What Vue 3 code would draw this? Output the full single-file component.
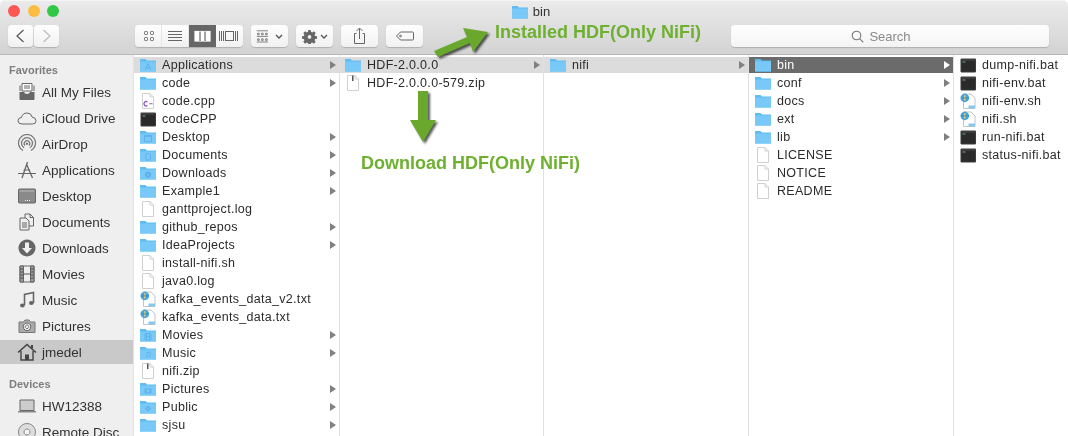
<template>
  <div class="finder">
    <header class="titlebar">
      <div class="title-row">
        <div class="lights">
          <span class="light red"></span>
          <span class="light yellow"></span>
          <span class="light green"></span>
        </div>
        <div class="title">
          <svg class="file-icon" viewBox="0 0 16 16"><path v-for="(p, i) in fileIcons.folder" :key="i" :d="p.d" :fill="p.f || 'none'" :stroke="p.s || 'none'" /></svg>
          <span>bin</span>
        </div>
      </div>
      <div class="toolbar">
        <div class="nav">
          <button class="btn nav-btn">
            <svg viewBox="0 0 25 22"><path d="M15.5 5 L9 11 L15.5 17" fill="none" stroke="#555" stroke-width="1.2" /></svg>
          </button>
          <button class="btn nav-btn">
            <svg viewBox="0 0 25 22"><path d="M9.5 5 L16 11 L9.5 17" fill="none" stroke="#bbb" stroke-width="1.2" /></svg>
          </button>
        </div>
        <div class="btn views">
          <span class="view">
            <svg viewBox="0 0 27 22" fill="none" stroke="#666"><rect x="9.5" y="6.5" width="3" height="3" rx=".8" /><rect x="15.5" y="6.5" width="3" height="3" rx=".8" /><rect x="9.5" y="12.5" width="3" height="3" rx=".8" /><rect x="15.5" y="12.5" width="3" height="3" rx=".8" /></svg>
          </span>
          <span class="view">
            <svg viewBox="0 0 27 22" stroke="#666"><path d="M6 6.5h14M6 9.5h14M6 12.5h14M6 15.5h14" /></svg>
          </span>
          <span class="view active">
            <svg viewBox="0 0 27 22" fill="none" stroke="#fff" stroke-width="1.2"><rect x="6" y="6.5" width="15" height="9.5" fill="#fff" /><path d="M11 6.5v9.5M16 6.5v9.5" stroke="#666" /></svg>
          </span>
          <span class="view">
            <svg viewBox="0 0 27 22" fill="none" stroke="#666"><rect x="9.5" y="6.5" width="8" height="9" /><path d="M3.5 6v10M5.5 6v10M7.5 6v10M19.5 6v10M21.5 6v10" /></svg>
          </span>
        </div>
        <button class="btn menu-btn arrange">
          <svg class="wide" viewBox="0 0 20 20" fill="none" stroke="#666"><path d="M1 3.5h14M1 10.5h14M1 17.5h14" /><path d="M2 6.5h2v2h-2zM7 6.5h2v2h-2zM12 6.5h2v2h-2zM2 13.5h2v2h-2zM7 13.5h2v2h-2zM12 13.5h2v2h-2z" /></svg>
          <svg class="chev" viewBox="0 0 8 5"><path d="M1 1l3 3 3-3" fill="none" stroke="#555" stroke-width="1.3" /></svg>
        </button>
        <button class="btn menu-btn gear">
          <svg class="wide" viewBox="0 0 16 16"><path d="M6.7 1h2.6l.3 2 1.4.6 1.7-1.2 1.9 1.9-1.2 1.7.6 1.4 2 .3v2.6l-2 .3-.6 1.4 1.2 1.7-1.9 1.9-1.7-1.2-1.4.6-.3 2H6.7l-.3-2-1.4-.6-1.7 1.2-1.9-1.9 1.2-1.7-.6-1.4-2-.3V7.700l2-.3.6-1.400L1.400 4.300 3.300 2.400 5 3.600l1.400-.6z" fill="#666" /><circle cx="8" cy="8.500" r="2" fill="#eee" /></svg>
          <svg class="chev" viewBox="0 0 8 5"><path d="M1 1l3 3 3-3" fill="none" stroke="#555" stroke-width="1.3" /></svg>
        </button>
        <button class="btn plain-btn share">
          <svg viewBox="0 0 37 22" fill="none" stroke="#666"><path d="M15.500 8.500h-2v10h10v-10h-2M18.500 14V3.500M15.500 6l3-3 3 3" /></svg>
        </button>
        <button class="btn plain-btn tag">
          <svg viewBox="0 0 37 22" fill="none" stroke="#666"><path d="M10.500 11l4-4h12a1 1 0 0 1 1 1v6a1 1 0 0 1-1 1h-12z" /><circle cx="14.500" cy="11" r=".9" /></svg>
        </button>
        <div class="search">
          <svg viewBox="0 0 13 13" fill="none" stroke="#777" stroke-width="1.100"><circle cx="5.500" cy="5.500" r="4.300" /><path d="M8.700 8.700l3.600 3.600" /></svg>
          <span>Search</span>
        </div>
      </div>
    </header>

    <main class="browser">
      <aside class="sidebar">
        <template v-for="group in sidebar" :key="group.label">
          <div class="side-label">{{ group.label }}</div>
          <div v-for="item in group.items" :key="item.name" class="side-item" :class="{ current: item.name === 'jmedel' }">
            <svg class="side-icon" viewBox="0 0 20 20">
              <path v-for="(p, i) in sideIcons[item.icon]" :key="i" :d="p.d" :fill="p.f || 'none'" :stroke="p.s || 'none'" :stroke-width="p.w || 1" />
            </svg>
            <span>{{ item.name }}</span>
          </div>
        </template>
      </aside>

      <section v-for="(col, c) in columns" :key="c" class="column">
        <div v-for="row in col" :key="row.name" class="row" :class="row.sel">
          <svg class="file-icon" viewBox="0 0 16 16">
            <path v-for="(p, i) in fileIcons[row.icon || 'folder']" :key="i" :d="p.d" :fill="p.f || 'none'" :stroke="p.s || 'none'" :stroke-width="p.w || 1" />
          </svg>
          <span class="name">{{ row.name }}</span>
          <i v-if="row.dir" class="caret"></i>
        </div>
      </section>
    </main>

    <svg class="arrows" viewBox="0 0 1068 436">
      <path d="M434 51 L467 37 L463 28 L488 32 L473 52 L470 43 L438 57 Z" fill="#6aa82d" />
      <path d="M418 91 H428 V120 H436 L423 142 L410 120 H418 Z" fill="#6aa82d" />
    </svg>
    <div class="note note-installed">Installed HDF(Only NiFi)</div>
    <div class="note note-download">Download HDF(Only NiFi)</div>
  </div>
</template>

<script setup>
const blue = '#78c9f7'
const back = '#5fbcf2'
const mark = '#5fb3e9'
const folderBase = [
  { d: 'M0 3.500V2.500Q0 2 .5 2H5.500L7 3.500H16V14Q16 14.500 15.500 14.500H.5Q0 14.500 0 14Z', f: back },
  { d: 'M0 4.500H16V14Q16 14.500 15.500 14.500H.5Q0 14.500 0 14Z', f: blue },
]
const page = [
  { d: 'M2.500 .5H10L13.500 4V15.500H2.500Z', f: '#fff', s: '#d0d0d0' },
  { d: 'M10 .5V4H13.500', s: '#d0d0d0' },
]
const script = [
  { d: 'M3.500 1H11L15 5V15.500H3.500Z', f: '#fff', s: '#c4c4c4' },
  { d: 'M8.500 12.500H15V15.500H8.500Z', f: '#86c8ee' },
  { d: 'M4.800 .6a4.300 4.300 0 1 1-.01 0Z', f: '#4aa3dc' },
  { d: 'M4.100 2.200h1.400v5.400H4.100z', f: '#e6cf5c' },
  { d: 'M1 4.900h7.600', s: '#2f7fb6', w: 0.7 },
]

const fileIcons = {
  folder: folderBase,
  apps: [...folderBase, { d: 'M8 6.500L5.500 12.500M8 6.500L10.500 12.500M6 11H10', s: mark }],
  desk: [...folderBase, { d: 'M4.500 6.500H11.500V12.500H4.500Z', s: mark }, { d: 'M4.500 7H11.500V8H4.500Z', f: mark }],
  docs: [...folderBase, { d: 'M6 6.500H9L10.500 8V13H6Z', s: mark }],
  down: [...folderBase, { d: 'M8 6.500a3.200 3.200 0 1 1-.01 0ZM6.500 9.400L8 11.200 9.500 9.400Z', f: mark }],
  movie: [...folderBase, { d: 'M5 6.500H11V13H5ZM6.500 7V12.500M9.500 7V12.500M6.500 9.700H9.500', s: mark }],
  music: [...folderBase, { d: 'M7 11.500V7.500L10 7V11', s: mark }, { d: 'M5.500 11.500h1.500v1h-1.500zM8.500 11h1.500v1H8.500z', f: mark }],
  pics: [...folderBase, { d: 'M4.500 7.500H11.500V12.500H4.500Z', f: mark }, { d: 'M8 8.300a1.600 1.600 0 1 1-.01 0Z', f: blue }],
  pub: [...folderBase, { d: 'M8 6.500L11 9.500 8 12.500 5 9.500Z', f: mark }, { d: 'M8 8.500L9 9.500 8 10.500 7 9.500Z', f: blue }],
  page,
  zip: [...page, { d: 'M7 .5H8.500V6H7Z', f: '#555' }],
  cpp: [...page, { d: 'M7.500 9a2.200 2.200 0 1 0 0 3.500', s: '#8a4fc7', w: 1.200 }, { d: 'M9.300 10.800h1.500M11 10.800h1.500', s: '#8a4fc7', w: 1.100 }],
  term: [
    { d: 'M1 2H15.500V15H1Z', f: '#2a2a2a', s: '#3c3c3c' },
    { d: 'M1.500 2.500H15V3.500H1.500Z', f: '#4d4d4d' },
    { d: 'M2.500 4.500H5.500V5.500H2.500Z', f: '#6aa67a' },
  ],
  script,
}

const sideIcons = {
  files: [
    { d: 'M5 1.500H15V9H5Z', f: '#fff', s: '#666' },
    { d: 'M7 4H13M7 6H13', s: '#666' },
    { d: 'M2.500 10H7Q7.500 12 10 12T13 10H17.500V17Q17.500 18 16.500 18H3.500Q2.500 18 2.500 17Z', f: '#666' },
    { d: 'M3 3.500V9M17 3.500V9', s: '#666' },
  ],
  cloud: [{ d: 'M5 16Q1 16 1 12.800T4.500 9.500Q5.500 5 10 5T15 9Q19 9.500 19 12.800T15.500 16Z', s: '#666' }],
  air: [
    { d: 'M6 16.500A8.500 8.500 0 1 1 14 16.500', s: '#777', w: 1.200 },
    { d: 'M7 13.800A5.500 5.500 0 1 1 13 13.800', s: '#777', w: 1.200 },
    { d: 'M8 11.500A2.800 2.800 0 1 1 12 11.500', s: '#777', w: 1.200 },
    { d: 'M10 8.500a1.200 1.200 0 1 1-.01 0Z', f: '#777' },
  ],
  apps: [
    { d: 'M10.500 2L5 18M9.500 4L15.500 18', s: '#666', w: 1.300 },
    { d: 'M1 13.500H19M6.500 10H13', s: '#666' },
  ],
  desktop: [
    { d: 'M1.500 4Q1.500 3 2.500 3H17.500Q18.500 3 18.500 4V16Q18.500 17 17.500 17H2.500Q1.500 17 1.500 16Z', f: '#8a8a8a', s: '#666' },
    { d: 'M2.500 4.500H17.500V5.500H2.500Z', f: '#bbb' },
    { d: 'M8 14h1v1H8zM10 14h1v1h-1zM12 14h1v1h-1z', f: '#eee' },
  ],
  docs: [
    { d: 'M8 2H13L16.500 5.500V14H8Z', f: '#eee', s: '#666' },
    { d: 'M3 6H9L12 9V18H3Z', f: '#eee', s: '#666' },
    { d: 'M13 2V5.500H16.500M5 11H10M5 13H10M5 15H10', s: '#666' },
  ],
  downloads: [
    { d: 'M10 1.500a8.500 8.500 0 1 1-.01 0Z', f: '#666' },
    { d: 'M8 4.500H12V10H15L10 15.500 5 10H8Z', f: '#f0f0f0' },
  ],
  movies: [
    { d: 'M3 2H17V18H3Z', f: '#eee', s: '#666' },
    { d: 'M3 2H6.500V18H3ZM13.500 2H17V18H13.500Z', f: '#999', s: '#666' },
    { d: 'M6.500 10H13.500M3 5H6.500M3 8H6.500M3 11H6.500M3 14H6.500M13.500 5H17M13.500 8H17M13.500 11H17M13.500 14H17', s: '#555' },
  ],
  music: [
    { d: 'M7.500 15V4.500L16.500 2.500V13', s: '#666', w: 1.600 },
    { d: 'M3 15.500a2.400 2 0 1 0 4.800 0a2.400 2 0 1 0-4.800 0ZM12 13a2.400 2 0 1 0 4.800 0a2.400 2 0 1 0-4.800 0Z', f: '#666' },
  ],
  pictures: [
    { d: 'M2 6H6.500L8 4H12L13.500 6H18V16.500H2Z', f: '#aaa', s: '#777' },
    { d: 'M10 7a3.800 3.800 0 1 1-.01 0Z', f: '#eee', s: '#666' },
    { d: 'M10 9a1.800 1.800 0 1 1-.01 0Z', s: '#777' },
  ],
  home: [
    { d: 'M1 10.500L10 2.500 19 10.500', s: '#444', w: 1.600 },
    { d: 'M4 9V18H16V9', s: '#444', w: 1.400 },
    { d: 'M8 18V12.500H12V18Z', f: '#444' },
    { d: 'M14 3H16V6.500H14Z', f: '#444' },
  ],
  laptop: [
    { d: 'M3 4H17V14.500H3Z', f: '#ccc', s: '#666' },
    { d: 'M1 15H19V16.500H1Z', f: '#888' },
  ],
  disc: [
    { d: 'M10 1.500a8.500 8.500 0 1 1-.01 0Z', f: '#ddd', s: '#888' },
    { d: 'M10 7a3 3 0 1 1-.01 0Z', f: '#f4f4f4', s: '#888' },
  ],
}

const sidebar = [
  {
    label: 'Favorites',
    items: [
      { name: 'All My Files', icon: 'files' },
      { name: 'iCloud Drive', icon: 'cloud' },
      { name: 'AirDrop', icon: 'air' },
      { name: 'Applications', icon: 'apps' },
      { name: 'Desktop', icon: 'desktop' },
      { name: 'Documents', icon: 'docs' },
      { name: 'Downloads', icon: 'downloads' },
      { name: 'Movies', icon: 'movies' },
      { name: 'Music', icon: 'music' },
      { name: 'Pictures', icon: 'pictures' },
      { name: 'jmedel', icon: 'home' },
    ],
  },
  {
    label: 'Devices',
    items: [
      { name: 'HW12388', icon: 'laptop' },
      { name: 'Remote Disc', icon: 'disc' },
    ],
  },
]

const columns = [
  [
    { name: 'Applications', icon: 'apps', dir: true, sel: 'path' },
    { name: 'code', dir: true },
    { name: 'code.cpp', icon: 'cpp' },
    { name: 'codeCPP', icon: 'term' },
    { name: 'Desktop', icon: 'desk', dir: true },
    { name: 'Documents', icon: 'docs', dir: true },
    { name: 'Downloads', icon: 'down', dir: true },
    { name: 'Example1', dir: true },
    { name: 'ganttproject.log', icon: 'page' },
    { name: 'github_repos', dir: true },
    { name: 'IdeaProjects', dir: true },
    { name: 'install-nifi.sh', icon: 'page' },
    { name: 'java0.log', icon: 'page' },
    { name: 'kafka_events_data_v2.txt', icon: 'script' },
    { name: 'kafka_events_data.txt', icon: 'script' },
    { name: 'Movies', icon: 'movie', dir: true },
    { name: 'Music', icon: 'music', dir: true },
    { name: 'nifi.zip', icon: 'zip' },
    { name: 'Pictures', icon: 'pics', dir: true },
    { name: 'Public', icon: 'pub', dir: true },
    { name: 'sjsu', dir: true },
  ],
  [
    { name: 'HDF-2.0.0.0', dir: true, sel: 'path' },
    { name: 'HDF-2.0.0.0-579.zip', icon: 'zip' },
  ],
  [{ name: 'nifi', dir: true, sel: 'path' }],
  [
    { name: 'bin', dir: true, sel: 'active' },
    { name: 'conf', dir: true },
    { name: 'docs', dir: true },
    { name: 'ext', dir: true },
    { name: 'lib', dir: true },
    { name: 'LICENSE', icon: 'page' },
    { name: 'NOTICE', icon: 'page' },
    { name: 'README', icon: 'page' },
  ],
  [
    { name: 'dump-nifi.bat', icon: 'term' },
    { name: 'nifi-env.bat', icon: 'term' },
    { name: 'nifi-env.sh', icon: 'script' },
    { name: 'nifi.sh', icon: 'script' },
    { name: 'run-nifi.bat', icon: 'term' },
    { name: 'status-nifi.bat', icon: 'term' },
  ],
]
</script>

<style scoped>
.finder {
  position: relative;
  width: 1068px;
  height: 436px;
  overflow: hidden;
  display: flex;
  flex-direction: column;
  background: #fff;
  color: #2b2b2b;
  font-family: "Liberation Sans", Arial, sans-serif;
  font-size: 12.5px;
  filter: blur(0.3px);
}
.titlebar {
  height: 55px;
  flex: none;
  box-sizing: border-box;
  padding-top: 5px;
  border-radius: 5px 5px 0 0;
  background: linear-gradient(#ebebeb, #d3d3d3);
  box-shadow: inset 0 1px 0 #f6f6f6;
  border-bottom: 1px solid #b8b8b8;
}
.title-row {
  display: grid;
  grid-template-columns: 1fr auto 1fr;
  height: 20px;
  align-items: start;
  padding-left: 8px;
  padding-right: 8px;
}
.lights {
  display: flex;
  gap: 7.5px;
}
.light {
  width: 12px;
  height: 12px;
  border-radius: 50%;
}
.red { background: #fc5753; }
.yellow { background: #fdbc40; }
.green { background: #33c748; }
.title {
  grid-column: 2;
  display: flex;
  align-items: center;
  gap: 5px;
  font-size: 13px;
  color: #333;
  height: 13px;
  margin-left: -6px;
}
.toolbar {
  display: flex;
  align-items: flex-start;
  padding-left: 8px;
}
.btn {
  display: flex;
  align-items: center;
  box-sizing: border-box;
  height: 22px;
  padding: 0;
  border: none;
  border-radius: 4px;
  background: linear-gradient(#fefefe, #f1f1f1);
  box-shadow: 0 1px 1px rgba(0, 0, 0, 0.18);
}
.btn svg { display: block; }
.nav {
  display: flex;
  gap: 1px;
}
.nav-btn { width: 25px; }
.nav-btn svg { width: 25px; height: 22px; }
.views {
  margin-left: 76px;
  width: 108px;
  overflow: hidden;
}
.view {
  width: 27px;
  height: 22px;
  border-right: 1px solid #e6e6e6;
  box-sizing: border-box;
}
.view:last-child { border-right: none; }
.view svg { width: 27px; height: 22px; }
.view.active { background: #666; border-right: none; }
.menu-btn {
  width: 37px;
  justify-content: center;
  gap: 3px;
}
.arrange { margin-left: 8px; }
.gear { margin-left: 8px; }
.wide { width: 15px; height: 15px; }
.arrange .wide { width: 16px; height: 16px; }
.chev { width: 8px; height: 5px; }
.plain-btn { width: 37px; margin-left: 8px; }
.plain-btn svg { width: 37px; height: 22px; }
.search {
  margin-left: auto;
  margin-right: 19px;
  width: 318px;
  height: 22px;
  box-sizing: border-box;
  padding-right: 18px;
  display: flex;
  align-items: center;
  justify-content: center;
  gap: 5px;
  border-radius: 4px;
  background: linear-gradient(#fefefe, #f4f4f4);
  box-shadow: 0 1px 1px rgba(0, 0, 0, 0.18);
  color: #8a8a8a;
  font-size: 13px;
}
.search svg { width: 13px; height: 13px; }

.browser {
  flex: 1;
  min-height: 0;
  display: grid;
  grid-template-columns: 134px 206px 204px 205px 205px 1fr;
}
.sidebar {
  box-sizing: border-box;
  padding-top: 7px;
  display: flex;
  flex-direction: column;
  background: #efefef;
  border-right: 1px solid #e2e2e2;
  overflow: hidden;
}
.side-label {
  flex: none;
  height: 17px;
  line-height: 17px;
  padding-left: 9px;
  font-size: 11px;
  font-weight: bold;
  color: #7d7d7d;
}
.side-label:not(:first-child) { margin-top: 11px; }
.side-item {
  flex: none;
  height: 24px;
  margin: 1px 0;
  display: flex;
  align-items: center;
  box-sizing: border-box;
  padding-left: 17px;
  gap: 5px;
  font-size: 13.5px;
  color: #333;
}
.side-item.current { background: #c9c9c9; }
.side-icon { width: 20px; height: 20px; flex: none; }
.column {
  box-sizing: border-box;
  padding-top: 1px;
  display: flex;
  flex-direction: column;
  border-right: 1px solid #e0e0e0;
  overflow: hidden;
}
.column:last-child { border-right: none; }
.column:nth-child(3) .row { padding-left: 5px; }
.row {
  flex: none;
  height: 16px;
  margin: 1px 0;
  display: flex;
  align-items: center;
  padding: 0 3px 0 6px;
  white-space: nowrap;
}
.row.path { background: #dcdcdc; }
.row.active { background: #6b6b6b; color: #fff; }
.file-icon {
  width: 16px;
  height: 16px;
  flex: none;
}
.name {
  margin-left: 6px;
  flex: 1;
  letter-spacing: 0.3px;
}
.caret {
  width: 0;
  height: 0;
  border-left: 6px solid #808080;
  border-top: 4px solid transparent;
  border-bottom: 4px solid transparent;
}
.row.active .caret { border-left-color: #fff; }

.arrows {
  position: absolute;
  left: 0;
  top: 0;
  width: 1068px;
  height: 436px;
  filter: drop-shadow(2px 2px 1px rgba(0, 0, 0, 0.65));
  pointer-events: none;
}
.note {
  position: absolute;
  font-size: 18px;
  font-weight: bold;
  color: #6eb02f;
  white-space: nowrap;
  line-height: 20px;
}
.note-installed { left: 495px; top: 22px; }
.note-download { left: 361px; top: 153px; }
</style>
